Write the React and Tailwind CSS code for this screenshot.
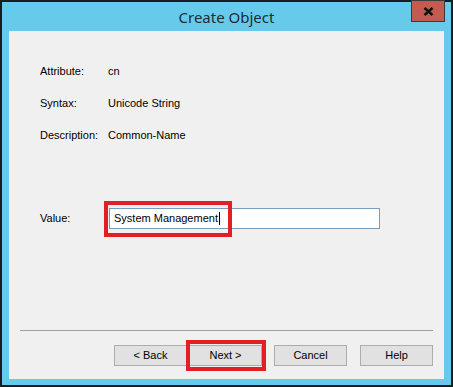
import React from 'react';

const ui = { fontFamily: '"Liberation Sans", Arial, sans-serif' };

function Field({ label, value }) {
    return (
        <div className="flex items-center h-[32px] pl-[31px] text-[11px] text-black">
            <span className="w-[68px]">{label}</span>
            <span>{value}</span>
        </div>
    );
}

function WinButton({ children, className = '' }) {
    return (
        <button className={`relative w-[73px] h-[21px] bg-[#e1e1e1] border border-[#adadad] text-[11px] text-black flex items-center justify-center ${className}`}>
            {children}
        </button>
    );
}

export default function App() {
    return (
        <div className="w-[453px] h-[387px] bg-[#66cbea] border-2 border-[#1c1c1c] flex flex-col" style={ui}>
            {/* title bar */}
            <div className="relative h-[29px] flex items-center justify-center">
                <span className="text-[15px] text-[#1c2b36] mt-[1px]" style={{ fontFamily: '"Noto Sans", "Open Sans", sans-serif' }}>
                    Create Object
                </span>
                <div className="absolute top-[-2px] right-[6px] w-[34px] h-[22px] bg-[#c55a50] border border-[#3b3b3b] flex items-center justify-center">
                    <svg width="11" height="9" viewBox="0 0 11 9">
                        <path d="M1.5 1 L9.5 8 M9.5 1 L1.5 8" stroke="#111" strokeWidth="2.4" />
                    </svg>
                </div>
            </div>

            {/* client area */}
            <div className="flex-1 mx-[7px] mb-[6px] bg-[#f0f0f0] flex flex-col">
                <div className="pt-[24px]">
                    <Field label="Attribute:" value="cn" />
                    <Field label="Syntax:" value="Unicode String" />
                    <Field label="Description:" value="Common-Name" />
                </div>

                <div className="mt-[56px] flex items-center h-[22px] pl-[31px] text-[11px] text-black">
                    <span className="w-[69px]">Value:</span>
                    <div className="relative w-[271px] h-[21px] bg-white border border-[#7a9cbf] flex items-center pl-[4px]">
                        <span>System Management</span>
                        <span className="w-px h-[13px] bg-black ml-[1px]" />
                        <div className="absolute left-[-6px] top-[-8px] w-[128px] h-[36px] border-[4px] border-[#e41e26]" />
                    </div>
                </div>

                <div className="mt-[101px] mx-[11px] h-px bg-[#a0a0a0]" />

                <div className="mt-[14px] flex justify-end pr-[11px]">
                    <WinButton>&lt; Back</WinButton>
                    <WinButton className="ml-[2px]">
                        Next &gt;
                        <div className="absolute left-[-4px] top-[-6px] w-[80px] h-[31px] border-[4px] border-[#e41e26]" />
                    </WinButton>
                    <WinButton className="ml-[12px]">Cancel</WinButton>
                    <WinButton className="ml-[13px]">Help</WinButton>
                </div>
            </div>
        </div>
    );
}
